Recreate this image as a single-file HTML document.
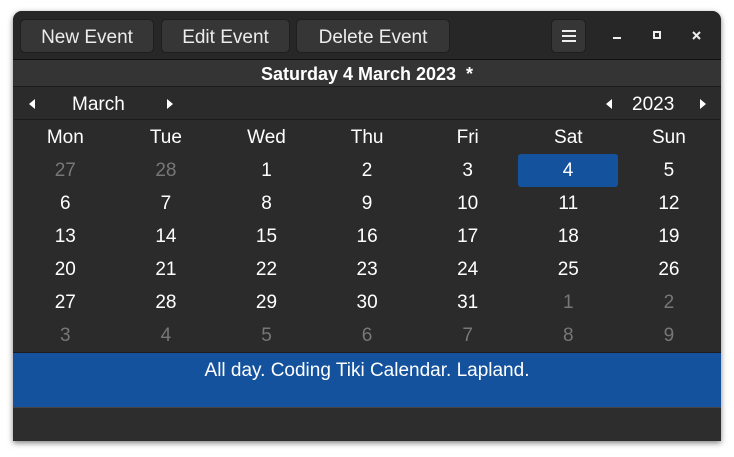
<!DOCTYPE html>
<html><head><meta charset="utf-8"><style>
*{margin:0;padding:0;box-sizing:border-box}
body{width:734px;height:457px;background:#fff;position:relative;overflow:hidden;font-family:"Liberation Sans","DejaVu Sans",sans-serif;color:#fff}
.win{position:absolute;left:13px;top:11px;width:708px;height:430px;background:#2d2d2d;border-radius:9px 9px 0 0;box-shadow:0 2px 6px rgba(0,0,0,.5);overflow:hidden}
.hb{position:absolute;left:0;top:0;width:708px;height:49px;background:#272727;border-bottom:1px solid #111}
.btn{position:absolute;top:8px;height:34px;background:#363636;border:1px solid #1e1e1e;border-radius:5px;font-size:19px;line-height:35px;text-align:center;color:#ececec}
.title{position:absolute;left:0;top:49px;width:708px;height:27px;background:#343434;text-align:center;font-weight:bold;font-size:18px;line-height:29px;border-bottom:1px solid #1c1c1c}
.mrow{position:absolute;left:1px;top:76px;width:706px;height:33px;background:#2b2b2b;border-bottom:1px solid #1c1c1c;font-size:19px;line-height:35px}
.cal{position:absolute;left:2px;top:109px;width:706px;height:232px;background:#2b2b2b}
.cell{position:absolute;width:100.6px;text-align:center;font-size:19px;height:33px;line-height:36px}
.dim{color:#777}
.sel{background:#15529e;border-radius:3px}
.ev{position:absolute;left:0;top:341px;width:708px;height:56px;background:#15529e;border-top:1px solid #1c1c1c;border-bottom:1px solid #444;text-align:center;font-size:19px;line-height:35px}
.tri{position:absolute;top:12px;width:0;height:0;border-top:5px solid transparent;border-bottom:5px solid transparent}
.l{border-right:6px solid #fff}.r{border-left:6px solid #fff}
</style></head><body>
<div class="win">
 <div class="hb">
  <div class="btn" style="left:7px;width:134px">New Event</div>
  <div class="btn" style="left:148px;width:129px">Edit Event</div>
  <div class="btn" style="left:283px;width:154px">Delete Event</div>
  <div class="btn" style="left:538px;width:35px"><svg width="16" height="14" style="margin-top:9px;vertical-align:top" viewBox="0 0 16 14"><rect x="1" y="1" width="14" height="2" fill="#eee"/><rect x="1" y="6" width="14" height="2" fill="#eee"/><rect x="1" y="11" width="14" height="2" fill="#eee"/></svg></div>
  <div style="position:absolute;left:600px;top:26px;width:8px;height:2px;background:#eee"></div>
  <div style="position:absolute;left:640px;top:20px;width:8px;height:8px;border:2px solid #eee"></div>
  <svg style="position:absolute;left:679px;top:20px" width="9" height="9" viewBox="0 0 9 9"><path d="M1 1L8 8M8 1L1 8" stroke="#eee" stroke-width="2"/></svg>
 </div>
 <div class="title">Saturday 4 March 2023 &nbsp;*</div>
 <div class="mrow">
  <div class="tri l" style="left:15px"></div>
  <div style="position:absolute;left:58px;top:0">March</div>
  <div class="tri r" style="left:153px"></div>
  <div class="tri l" style="left:592px"></div>
  <div style="position:absolute;left:618px;top:0">2023</div>
  <div class="tri r" style="left:686px"></div>
 </div>
 <div class="cal" id="cal"></div>
 <div class="ev">All day. Coding Tiki Calendar. Lapland.</div>
</div>
<script>
var c=document.getElementById('cal'),h='';
var names=['Mon','Tue','Wed','Thu','Fri','Sat','Sun'];
for(var i=0;i<7;i++)h+='<div class="cell" style="left:'+(i*100.6)+'px;top:0">'+names[i]+'</div>';
var d=[27,28,1,2,3,4,5,6,7,8,9,10,11,12,13,14,15,16,17,18,19,20,21,22,23,24,25,26,27,28,29,30,31,1,2,3,4,5,6,7,8,9];
for(var k=0;k<42;k++){var r=Math.floor(k/7),col=k%7,cls='cell';
 if(k<2||k>=33)cls+=' dim'; if(k==5)cls+=' sel';
 h+='<div class="'+cls+'" style="left:'+(col*100.6)+'px;'+(k==5?'width:100px;height:33px;line-height:34px;':'')+'top:'+(33+r*33+(k==5?1:0))+'px">'+d[k]+'</div>';}
c.innerHTML=h;
</script>
</body></html>
